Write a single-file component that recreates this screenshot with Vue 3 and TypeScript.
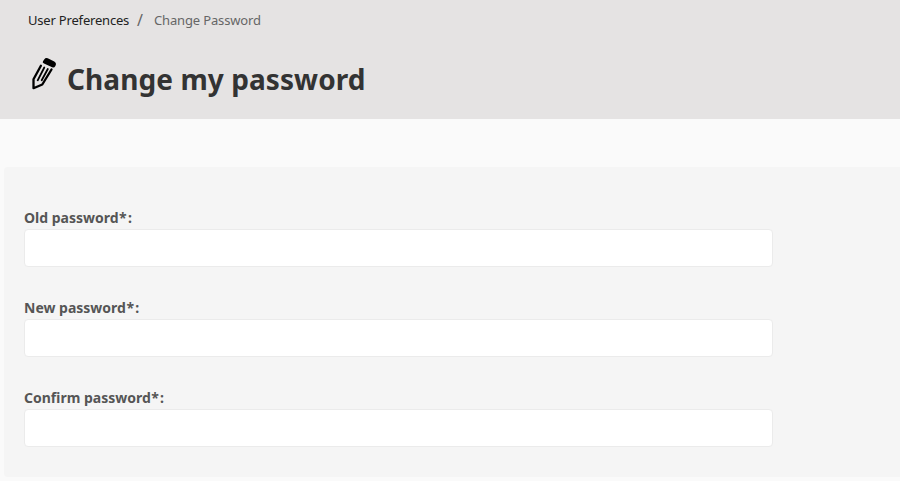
<script setup lang="ts">
interface Field { id: string; label: string }
const fields: Field[] = [
  { id: 'old', label: 'Old password' },
  { id: 'new', label: 'New password' },
  { id: 'confirm', label: 'Confirm password' },
]
</script>

<template>
  <div class="page">
    <header class="header">
      <nav class="crumbs">
        <a class="link">User Preferences</a>
        <span class="sep">/</span>
        <span class="current">Change Password</span>
      </nav>
      <div class="title">
        <svg class="pencil" width="26" height="34" viewBox="0 0 26 34">
          <path d="M13.200 2.400Q14.500 .6 16.700 1.300L23.300 4.500Q25.500 5.700 24.900 7.700L24.200 9.300Q23.200 11.200 21.200 10.300L13 6.600Q11 5.600 12 4.200Z" />
          <path d="M9.900 8.800 2.500 22.200V31.200L11.300 27.500 20.500 12.500" fill="none" stroke="#000" stroke-width="2.300" stroke-linecap="round" stroke-linejoin="round" />
          <path d="M13.300 10.500 6.700 23.300M16.800 12 10.700 23.200" fill="none" stroke="#000" stroke-width="1.800" stroke-linecap="round" />
        </svg>
        <h1>Change my password</h1>
      </div>
    </header>
    <form class="panel">
      <div v-for="field in fields" :key="field.id" class="field">
        <label :for="field.id">{{ field.label }}<span class="mark">*:</span></label>
        <input :id="field.id" type="password" />
      </div>
    </form>
  </div>
</template>

<style>
body { margin: 0; background: #fafafa; overflow: hidden; }
</style>
<style scoped>
.page { height: 481px; overflow: hidden; font-family: "Noto Sans", sans-serif; background: #fafafa; }
.header { height: 119px; box-sizing: border-box; padding: 11px 28px 0; background: #e5e3e3; }
.crumbs { display: flex; font-size: 13px; line-height: 18px; color: #666; }
.link { width: 101px; white-space: nowrap; letter-spacing: -.19px; color: #222; }
.sep { width: 8px; margin: 0 9px 0 8px; font-size: 16px; }
.current { letter-spacing: -.15px; }
.title { display: flex; align-items: flex-start; padding: 28px 0 0 3px; }
.pencil { display: block; }
h1 { margin: 2px 0 0 10px; font-size: 28px; line-height: 40px; letter-spacing: .08px; color: #333; }
.panel { margin: 48px 0 0 4px; height: 310px; box-sizing: border-box; padding: 40px 20px 0; background: #f5f5f5; border-radius: 4px 0 0 4px; }
.field { height: 90px; }
label { display: block; height: 22px; font-size: 14px; line-height: 22px; font-weight: 700; color: #555; }
.mark { margin-left: .5px; letter-spacing: 1.2px; }
input { display: block; box-sizing: border-box; width: 749px; height: 38px; padding: 8px; border: 1px solid #ebebeb; border-radius: 4px; background: #fff; outline: none; }
</style>
